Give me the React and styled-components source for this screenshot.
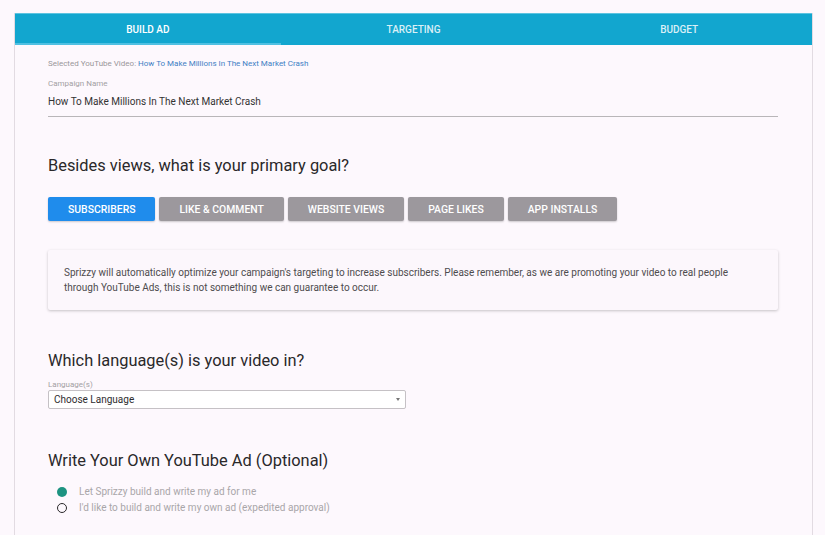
import React, { useState } from "react";
import styled, { createGlobalStyle } from "styled-components";

const GlobalStyle = createGlobalStyle`
  html, body {
    margin: 0;
    padding: 0;
    background: #fdf8fd;
    font-family: Roboto, "Liberation Sans", Arial, sans-serif;
  }
`;

const tabs = ["Build Ad", "Targeting", "Budget"];
const goals = ["Subscribers", "Like & Comment", "Website Views", "Page Likes", "App Installs"];

const App = () => {
  const [goal, setGoal] = useState(0);
  const [own, setOwn] = useState(false);

  return (
    <>
      <GlobalStyle />
      <Page>
        <Card>
          <TabBar>
            {tabs.map((t, i) => (
              <Tab key={t} active={i === 0}>
                {t}
              </Tab>
            ))}
          </TabBar>
          <Body>
            <Selected>
              Selected YouTube Video: <VideoLink>How To Make Millions In The Next Market Crash</VideoLink>
            </Selected>
            <Field>
              <SmallLabel>Campaign Name</SmallLabel>
              <NameInput defaultValue="How To Make Millions In The Next Market Crash" />
            </Field>

            <Heading top={37}>Besides views, what is your primary goal?</Heading>
            <GoalRow>
              {goals.map((g, i) => (
                <GoalButton key={g} active={i === goal} onClick={() => setGoal(i)}>
                  {g}
                </GoalButton>
              ))}
            </GoalRow>
            <InfoBox>
              Sprizzy will automatically optimize your campaign's targeting to increase subscribers. Please remember, as we are
              promoting your video to real people through YouTube Ads, this is not something we can guarantee to occur.
            </InfoBox>

            <Heading top={39}>Which language(s) is your video in?</Heading>
            <SmallLabel gap={6}>Language(s)</SmallLabel>
            <Select>
              <span>Choose Language</span>
              <Caret />
            </Select>

            <Heading top={40}>Write Your Own YouTube Ad (Optional)</Heading>
            <Radios>
              <RadioRow onClick={() => setOwn(false)}>
                <RadioDot checked={!own} />
                Let Sprizzy build and write my ad for me
              </RadioRow>
              <RadioRow onClick={() => setOwn(true)}>
                <RadioDot checked={own} />
                I'd like to build and write my own ad (expedited approval)
              </RadioRow>
            </Radios>
          </Body>
        </Card>
      </Page>
    </>
  );
};

export default App;

const Page = styled.div`
  padding: 13px 12px 0 14px;
  height: 535px;
  box-sizing: border-box;
  overflow: hidden;
`;

const Card = styled.div`
  background: #fdf8fd;
  border-left: 1px solid #e2dbe2;
  border-right: 1px solid #e2dbe2;
  min-height: 540px;
`;

const TabBar = styled.div`
  display: grid;
  grid-template-columns: repeat(3, 1fr);
  height: 32px;
  background: #12a6cf;
  border-top: 1px solid #5cc3e0;
  box-sizing: border-box;
`;

const Tab = styled.div`
  display: flex;
  align-items: center;
  justify-content: center;
  color: ${(p) => (p.active ? "#ffffff" : "rgba(255,255,255,0.85)")};
  font-size: 10px;
  font-weight: 500;
  text-transform: uppercase;
  box-shadow: ${(p) => (p.active ? "inset 0 -2px 0 #4fc0e2" : "none")};
`;

const Body = styled.div`
  padding: 13px 34px 0 33px;
`;

const Selected = styled.div`
  font-size: 8px;
  color: #9a979a;
  line-height: 12px;
`;

const VideoLink = styled.span`
  color: #3f7fc4;
`;

const Field = styled.div`
  margin-top: 8px;
  border-bottom: 1px solid #b9b6b9;
  padding-bottom: 6px;
`;

const SmallLabel = styled.div`
  margin-top: ${(p) => p.gap || 0}px;
  font-size: 8px;
  color: #a3a0a3;
  line-height: 12px;
`;

const NameInput = styled.input`
  display: block;
  width: 100%;
  border: none;
  background: transparent;
  padding: 0;
  margin-top: 4px;
  font-family: inherit;
  font-size: 10px;
  color: #333;
  line-height: 16px;
  outline: none;
`;

const Heading = styled.h2`
  margin: ${(p) => p.top}px 0 0;
  font-size: 16.4px;
  font-weight: 400;
  color: #2a282a;
  line-height: 24px;
`;

const GoalRow = styled.div`
  display: flex;
  gap: 4px;
  margin-top: 19px;
`;

const GoalButton = styled.button`
  height: 24px;
  padding: 0 20px;
  border: none;
  border-radius: 2px;
  background: ${(p) => (p.active ? "#1f8cec" : "#9c989d")};
  color: #ffffff;
  font-family: inherit;
  font-size: 10.4px;
  font-weight: 500;
  text-transform: uppercase;
  box-shadow: 0 1px 2px rgba(0, 0, 0, 0.2);
  cursor: pointer;
`;

const InfoBox = styled.div`
  margin-top: 29px;
  padding: 15px 16px 15px;
  min-height: 60px;
  box-sizing: border-box;
  background: #fcf7fc;
  box-shadow: 0 1px 3px rgba(0, 0, 0, 0.22);
  border-radius: 2px;
  font-size: 10px;
  line-height: 15px;
  color: #4e4c4e;
`;

const Select = styled.div`
  display: flex;
  align-items: center;
  justify-content: space-between;
  width: 358px;
  height: 19px;
  box-sizing: border-box;
  margin-top: -1px;
  padding: 0 5px 0 5px;
  border: 1px solid #c5c1c5;
  border-radius: 2px;
  background: #fff;
  font-size: 10px;
  color: #2e2c2e;
`;

const Caret = styled.span`
  width: 0;
  height: 0;
  border-left: 2.5px solid transparent;
  border-right: 2.5px solid transparent;
  border-top: 3px solid #777;
`;

const Radios = styled.div`
  margin-top: 12px;
  padding-left: 9px;
  display: flex;
  flex-direction: column;
  gap: 3px;
`;

const RadioRow = styled.label`
  display: flex;
  align-items: center;
  gap: 12px;
  font-size: 10px;
  line-height: 13px;
  color: #a9a6a9;
  cursor: pointer;
`;

const RadioDot = styled.span`
  width: 10px;
  height: 10px;
  box-sizing: border-box;
  border-radius: 50%;
  border: ${(p) => (p.checked ? "none" : "1.5px solid #2a282a")};
  background: ${(p) => (p.checked ? "#1d9381" : "transparent")};
`;
